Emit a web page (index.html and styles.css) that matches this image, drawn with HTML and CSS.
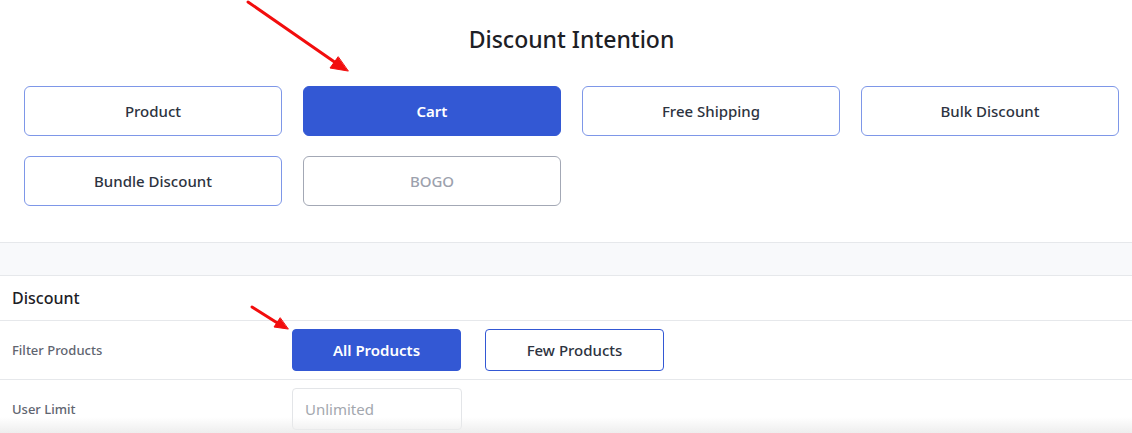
FILE: index.html
```html
<!DOCTYPE html>
<html>
<head>
<meta charset="utf-8">
<link rel="stylesheet" href="styles.css">
</head>
<body>
<section class="intent">
  <h1 class="title">Discount Intention</h1>
  <div class="choices">
    <button class="choice">Product</button>
    <button class="choice active">Cart</button>
    <button class="choice">Free Shipping</button>
    <button class="choice">Bulk Discount</button>
    <button class="choice">Bundle Discount</button>
    <button class="choice disabled">BOGO</button>
  </div>
</section>
<div class="band"></div>
<section class="discount">
  <h2 class="section-title">Discount</h2>
  <div class="row">
    <div class="label">Filter Products</div>
    <div class="field">
      <button class="opt opt-all">All Products</button>
      <button class="opt opt-few">Few Products</button>
    </div>
  </div>
  <div class="row">
    <div class="label">User Limit</div>
    <div class="field">
      <input class="input" type="text" placeholder="Unlimited">
    </div>
  </div>
</section>
<svg class="arrows" width="1132" height="433" viewBox="0 0 1132 433">
  <g stroke="#f20d0d" stroke-width="3" stroke-linecap="round" fill="#f20d0d">
    <line x1="248" y1="2" x2="336" y2="63"/>
    <polygon points="348,71 330,68 338,57" stroke-width="1"/>
    <line x1="252" y1="307" x2="279" y2="324"/>
    <polygon points="288,329 274,327 280,318" stroke-width="1"/>
  </g>
</svg>
<div class="shade"></div>
</body>
</html>
```

FILE: styles.css
```css
* { box-sizing: border-box; }
html, body { margin: 0; padding: 0; }
body {
  font-family: "Noto Sans", "Open Sans", sans-serif;
  background: #fff;
  color: #1f2329;
  width: 1132px;
  height: 433px;
  overflow: hidden;
  position: relative;
}
.intent {
  padding: 23px 13px 36px 24px;
  border-bottom: 1px solid #e6e8eb;
}
.title {
  margin: 0 0 31px 0;
  text-align: center;
  font-size: 23px;
  font-weight: 500;
  line-height: 32px;
  color: #1d2025;
}
.choices {
  display: grid;
  grid-template-columns: repeat(4, 1fr);
  gap: 20px 21px;
}
.choice {
  height: 50px;
  border: 1px solid #7e97e8;
  border-radius: 6px;
  background: #fff;
  font-family: inherit;
  font-size: 15px;
  font-weight: 500;
  color: #2d3340;
}
.choice.active {
  background: #3358d4;
  border-color: #3358d4;
  color: #fff;
  font-weight: 600;
}
.choice.disabled {
  border-color: #a3a8b5;
  color: #9ca1ad;
}
.band {
  height: 33px;
  background: #f8f9fb;
  border-bottom: 1px solid #e6e8eb;
}
.section-title {
  margin: 0;
  height: 45px;
  padding: 0 12px;
  display: flex;
  align-items: center;
  font-size: 16px;
  font-weight: 500;
  color: #1d2025;
  border-bottom: 1px solid #e6e8eb;
}
.row {
  display: flex;
  align-items: center;
  height: 59px;
  border-bottom: 1px solid #e6e8eb;
}
.label {
  width: 292px;
  padding-left: 12px;
  font-size: 13px;
  font-weight: 500;
  color: #5f6570;
}
.field {
  display: flex;
  gap: 24px;
  align-items: center;
}
.opt {
  height: 42px;
  border-radius: 4px;
  font-family: inherit;
  font-size: 15px;
  font-weight: 500;
}
.opt-all {
  width: 169px;
  background: #3358d4;
  border: 1px solid #3358d4;
  color: #fff;
  font-weight: 600;
}
.opt-few {
  width: 179px;
  background: #fff;
  border: 1px solid #3358d4;
  color: #2d3340;
}
.input {
  width: 170px;
  height: 42px;
  border: 1px solid #e3e5e8;
  border-radius: 4px;
  padding: 0 12px;
  font-family: inherit;
  font-size: 15px;
  color: #2d3340;
  outline: none;
}
.input::placeholder { color: #a3a7ae; }
.arrows {
  position: absolute;
  left: 0;
  top: 0;
  pointer-events: none;
}
.shade {
  position: absolute;
  left: 0;
  right: 0;
  bottom: 0;
  height: 16px;
  background: linear-gradient(to bottom, rgba(240,240,240,0), rgba(236,236,236,0.9));
  pointer-events: none;
}
```
